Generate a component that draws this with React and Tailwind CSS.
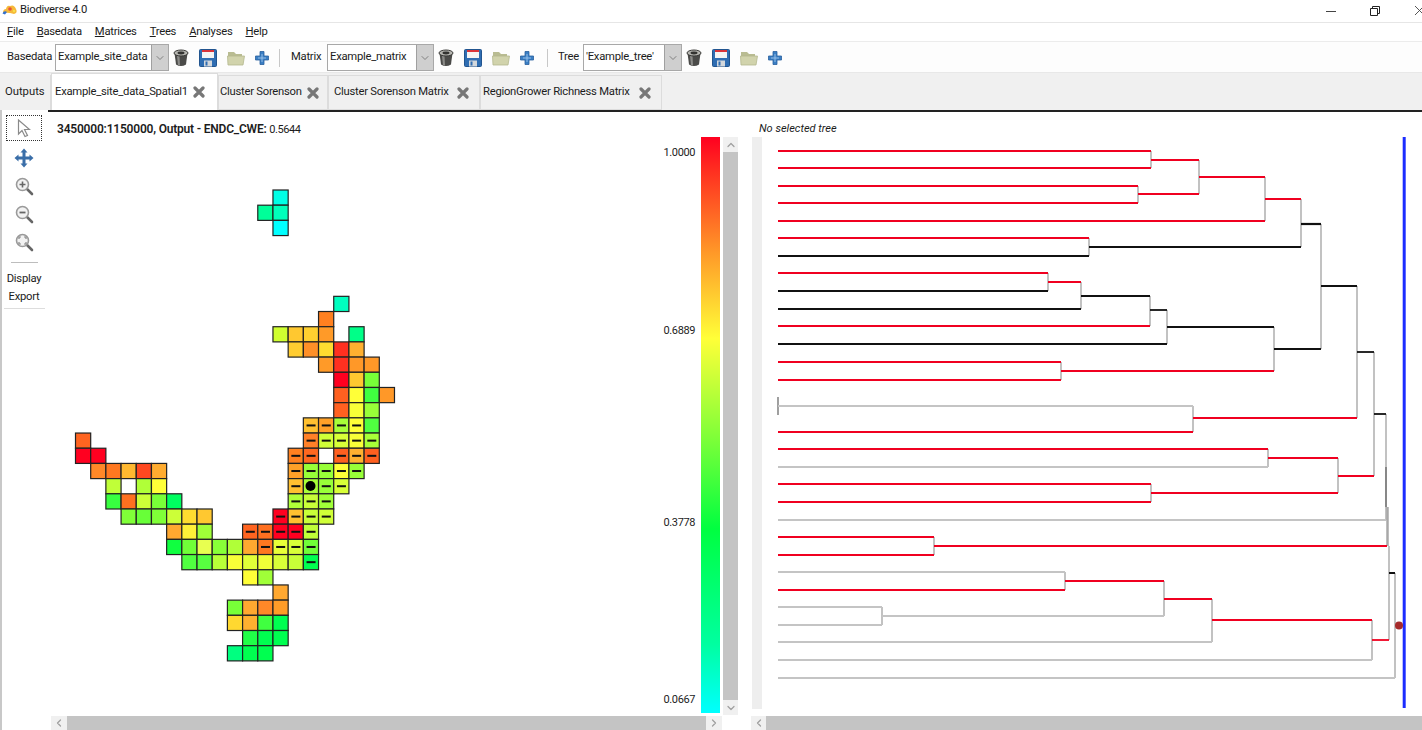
import { ChevronDown, ChevronUp, ChevronLeft, ChevronRight } from "lucide-react";

const R = "#f00020";
const K = "#111111";
const G = "#c4c4c4";
const V = "#a8a8a8";

// [y, x1, x2, colour, thickness]
const horizontals = [
  [151, 778, 1151, R], [168, 778, 1151, R], [160, 1151, 1199, R], [186, 778, 1138, R], [203, 778, 1138, R],
  [194, 1138, 1199, R], [177, 1199, 1265, R], [221, 778, 1265, R], [199, 1265, 1301, R], [238, 778, 1089, R],
  [256, 778, 1089, K], [247, 1089, 1301, K], [224, 1301, 1321, K, 2.2], [286, 1321, 1357, K, 2.2],
  [273, 778, 1048, R], [291, 778, 1048, K], [282, 1048, 1081, R], [309, 778, 1081, K], [296, 1081, 1150, K],
  [326, 778, 1150, R], [310, 1150, 1167, K], [344, 778, 1167, K], [327, 1167, 1274, K], [362, 778, 1061, R],
  [380, 778, 1061, R], [371, 1061, 1274, R], [349, 1274, 1321, K, 2.2], [406, 778, 1193, G], [432, 778, 1193, R],
  [418, 1193, 1357, R], [352, 1357, 1374, K], [414, 1374, 1386, K], [449, 778, 1268, R], [467, 778, 1268, G],
  [458, 1268, 1338, R], [484, 778, 1151, R], [502, 778, 1151, R], [493, 1151, 1338, R], [476, 1338, 1374, R],
  [520, 778, 1386, G], [537, 778, 934, R], [555, 778, 934, R], [546, 934, 1387, R], [572, 778, 1065, G],
  [590, 778, 1065, R], [581, 1065, 1164, R], [607, 778, 882, G], [625, 778, 882, G], [616, 882, 1164, G],
  [599, 1164, 1212, R], [642, 778, 1212, G], [620, 1212, 1372, R, 2], [660, 778, 1372, G], [640, 1372, 1389, R],
  [573, 1389, 1395, K, 2], [678, 778, 1395, G],
];

// [x, y1, y2, colour, thickness]
const verticals = [
  [1151, 151, 168], [1138, 186, 203], [1199, 160, 194], [1265, 177, 221], [1089, 238, 256], [1301, 199, 247],
  [1321, 224, 349], [1048, 273, 291], [1081, 282, 309], [1150, 296, 326], [1167, 310, 344], [1061, 362, 380],
  [1274, 327, 371], [778, 397, 415, "#777777"], [1193, 406, 432], [1357, 286, 418], [1374, 352, 476],
  [1386, 414, 467], [1386, 467, 507, "#555555"], [1386, 507, 520], [1268, 449, 467], [1151, 484, 502], [1338, 458, 493],
  [934, 537, 555], [1387.5, 507, 546, V, 2.5], [1389, 546, 640], [1065, 572, 590], [882, 607, 625], [1164, 581, 616],
  [1212, 599, 642], [1372, 620, 660], [1395, 573, 678],
];

// row, first column, colours; "-" on the end means the cell has a dash, null leaves a hole
const mapRows = [
  [0, 13, ["#00ffe6"]],
  [1, 12, ["#00ff99", "#00ffbb"]],
  [2, 13, ["#00ffff"]],
  [7, 17, ["#00ffc0"]],
  [8, 16, ["#ff8020"]],
  [9, 13, ["#d0ff30", "#ffc830", "#ffd030", "#ff9a28", null, "#00ff88"]],
  [10, 14, ["#ffcc30", "#ff9028", "#ffdc30", "#ff3020", "#ffb030"]],
  [11, 16, ["#ff9a28", "#ff3020", "#ff9828", "#ff9828"]],
  [12, 17, ["#ff0020", "#ffc830", "#78ff38"]],
  [13, 17, ["#ff6020", "#ffff38", "#40ff40", "#ff9828"]],
  [14, 17, ["#ff6020", "#f8ff38", "#98ff38"]],
  [15, 15, ["#ffc030-", "#ffa028-", "#a8ff38-", "#ffff38-", "#50ff40"]],
  [16, 0, ["#ff6420"]],
  [16, 15, ["#ff8028-", "#d0ff38-", "#d8ff38-", "#f8ff38-", "#a8ff38-"]],
  [17, 0, ["#ff0020", "#ff0020"]],
  [17, 14, ["#ff8020-", "#ff6820-", null, "#ff6020-", "#ffb030-", "#ff6020-"]],
  [18, 1, ["#ff8828", "#ff7820", "#ffb830", "#ff4820", "#ffac30"]],
  [18, 14, ["#ffa028-", "#98ff38-", "#98ff38-", "#ffff38-", "#98ff38-"]],
  [19, 2, ["#c0ff38", null, "#b0ff38", "#ffff38"]],
  [19, 14, ["#ffc030-", "#a8ff38", "#98ff38-", "#d8ff38-"]],
  [20, 2, ["#38ff40", "#ff7020", "#ccff38", "#78ff38", "#00ff60"]],
  [20, 14, ["#b0ff38-", "#c8ff38-", "#a0ff38-"]],
  [21, 3, ["#80ff38", "#68ff38", "#80ff38", "#ccff38", "#ffdc30", "#ffc830"]],
  [21, 13, ["#ff0020-", "#ffc030-", "#c8ff38-", "#d0ff38-"]],
  [22, 6, ["#ffa830", "#fff038", "#a0ff38"]],
  [22, 11, ["#ff6420-", "#ff7020-", "#ff0020-", "#ff0020-", "#c0ff38-"]],
  [23, 6, ["#10ff40", "#70ff38", "#e8ff50", "#88ff38", "#b0ff38", "#ffa830", "#ff7820-", "#e8ff38-", "#d8ff38-", "#70ff38-"]],
  [24, 7, ["#50ff40", "#58ff40", "#b8ff38", "#f8ff38", "#e0ff38", "#f0ff38", "#d8ff38", "#c8ff38", "#00ff50-"]],
  [25, 11, ["#ffff38", "#a0ff38"]],
  [26, 13, ["#ffa830"]],
  [27, 10, ["#78ff38", "#ffa830", "#ff8828", "#ff9c28"]],
  [28, 10, ["#ffd830", "#ffb030", "#40ff40", "#00ff50"]],
  [29, 11, ["#20ff48", "#00ff50", "#00ff50"]],
  [30, 10, ["#00ff80", "#00ff50", "#00ff50"]],
];

const PITCH = 15.19;

function MapGrid() {
  const cells = [];
  mapRows.forEach(([row, col, colours]) => {
    colours.forEach((entry, i) => {
      if (entry) cells.push({ x: 75.5 + (col + i) * PITCH, y: 190 + row * PITCH, colour: entry.replace("-", ""), dash: entry.endsWith("-") });
    });
  });
  return (
    <svg viewBox="51 137 599 579" className="w-[599px] h-[579px] shrink-0">
      {cells.map((c, i) => (
        <rect key={i} x={c.x} y={c.y} width={PITCH} height={PITCH} fill={c.colour} stroke="#222222" strokeWidth="1.2" />
      ))}
      {cells.filter((c) => c.dash).map((c, i) => (
        <rect key={i} x={c.x + 3.2} y={c.y + 6.6} width="9" height="2" fill="#111111" />
      ))}
      <circle cx="310.5" cy="486" r="5" fill="#000000" />
    </svg>
  );
}

function Tree() {
  return (
    <svg viewBox="762 137 660 579" className="w-[660px] h-[579px] shrink-0">
      {verticals.map(([x, y1, y2, colour, width], i) => (
        <line key={i} x1={x} y1={y1} x2={x} y2={y2} stroke={colour || V} strokeWidth={width || 1.4} />
      ))}
      {horizontals.map(([y, x1, x2, colour, width], i) => (
        <line key={i} x1={x1} y1={y} x2={x2} y2={y} stroke={colour} strokeWidth={width || 1.8} />
      ))}
      <rect x="1402.7" y="137" width="3" height="571" fill="#1c2dff" />
      <circle cx="1399" cy="625.5" r="4" fill="#a52a2a" />
    </svg>
  );
}

function Barrel() {
  return (
    <svg width="16" height="18" viewBox="0 0 16 18">
      <path d="M1.5 4 L3 15.5 Q8 18.5 13 15.5 L14.5 4 Z" fill="#4a4a48" />
      <path d="M4 7 L5 16 L7 16.6 L6.5 7 Z" fill="#8b8b88" />
      <ellipse cx="8" cy="4" rx="7" ry="3" fill="#b5b5b0" stroke="#3c3c3a" strokeWidth="1" />
      <ellipse cx="8" cy="4" rx="3.5" ry="1.4" fill="#333331" />
    </svg>
  );
}

function Floppy() {
  return (
    <svg width="18" height="18" viewBox="0 0 18 18">
      <rect x="0.5" y="0.5" width="17" height="17" rx="1" fill="#2f6db2" stroke="#22558f" />
      <rect x="3" y="1" width="12" height="8" fill="#f4f4f4" />
      <rect x="3" y="1" width="12" height="2" fill="#d9343a" />
      <rect x="5" y="11.5" width="8" height="6" fill="#d4d8dc" />
      <rect x="6.5" y="12.5" width="2" height="4" fill="#2f6db2" />
    </svg>
  );
}

function Folder() {
  return (
    <svg width="18" height="16" viewBox="0 0 18 16">
      <path d="M1 2 H7 L9 4 H15 V6 H1 Z" fill="#b9bc92" />
      <path d="M0.5 6 H17.5 L16 15 H1 Z" fill="#d1d3ac" stroke="#b4b78e" strokeWidth="0.8" />
    </svg>
  );
}

function Plus() {
  return (
    <svg width="14" height="14" viewBox="0 0 14 14">
      <path d="M5 0.5 H9 V5 H13.5 V9 H9 V13.5 H5 V9 H0.5 V5 H5 Z" fill="#3b7fc4" stroke="#2a5f9e" strokeWidth="0.8" />
      <path d="M3 7 H11 M7 3 V11" stroke="#a9cdf0" strokeWidth="0.8" />
    </svg>
  );
}

function CloseX() {
  return (
    <svg width="12" height="12" viewBox="0 0 12 12" className="shrink-0">
      <path d="M2 2 L10 10 M10 2 L2 10" stroke="#777777" strokeWidth="3.2" strokeLinecap="round" />
    </svg>
  );
}

function Magnifier({ mark }) {
  return (
    <svg width="19" height="19" viewBox="0 0 19 19">
      <path d="M11.5 11.5 L17 17" stroke="#666666" strokeWidth="2.6" strokeLinecap="round" />
      <circle cx="7.5" cy="7.5" r="6" fill="#f2f2f2" stroke="#9a9a9a" strokeWidth="1.6" />
      {mark === "in" && <path d="M4.5 7.5 H10.5 M7.5 4.5 V10.5" stroke="#666666" strokeWidth="1.6" />}
      {mark === "out" && <path d="M4.5 7.5 H10.5" stroke="#666666" strokeWidth="1.8" />}
      {mark === "fit" && <path d="M4 6 V4 H6 M9 4 H11 V6 M11 9 V11 H9 M6 11 H4 V9" stroke="#888888" strokeWidth="1.2" fill="none" />}
    </svg>
  );
}

function Combo({ value, width }) {
  return (
    <div className={`flex h-[27px] bg-white border border-[#a8a8a8] ${width}`}>
      <div className="flex-1 min-w-0 pl-[2px] flex items-center whitespace-nowrap">{value}</div>
      <div className="w-[17px] shrink-0 bg-[#cfcfcf] border-l border-[#a0a0a0] flex items-center justify-center">
        <ChevronDown size={12} color="#666666" strokeWidth={1.5} />
      </div>
    </div>
  );
}

function DataGroup({ label, value, width, labelClass }) {
  return (
    <div className="flex items-center">
      <span className={labelClass}>{label}</span>
      <Combo value={value} width={width} />
      <div className="flex items-center">
        <div className="w-[20px] flex justify-end"><Barrel /></div>
        <div className="w-[28px] flex justify-end"><Floppy /></div>
        <div className="w-[28px] flex justify-end"><Folder /></div>
        <div className="w-[24px] flex justify-end"><Plus /></div>
      </div>
    </div>
  );
}

function Tab({ label, width, pad }) {
  return (
    <div className={`h-[35px] bg-[#f0f0f0] border border-[#dcdcdc] flex items-center justify-between ${pad} ${width}`}>
      <span className="whitespace-nowrap">{label}</span>
      <CloseX />
    </div>
  );
}

export default function App() {
  const menus = [
    ["F", "ile"], ["B", "asedata"], ["M", "atrices"], ["T", "rees"], ["A", "nalyses"], ["H", "elp"],
  ];
  return (
    <div className="w-[1422px] h-[730px] overflow-hidden bg-white flex flex-col font-['Roboto',sans-serif] text-[11.25px] tracking-[-0.25px] text-[#1c1c1c]">
      {/* title bar */}
      <div className="h-[23px] shrink-0 flex items-center border-b border-[#e6e6e6]">
        <svg width="16" height="12" viewBox="0 0 16 12" className="ml-[2px] mr-[2px] -mt-[3px]">
          <path d="M1 9 Q1 5 4 5 Q5 1 8 2 Q12 0 14 5 Q16 9 12 10 Q6 8 1 9 Z" fill="#f6b93a" />
          <path d="M0.5 9.5 Q2 6 5 8 L3 10.5 Z" fill="#2f6fd0" />
          <circle cx="8" cy="5" r="1.8" fill="#e8503a" />
          <circle cx="12" cy="7" r="1.2" fill="#f7e04a" />
        </svg>
        <span className="-mt-[1px]">Biodiverse 4.0</span>
        <div className="ml-auto flex items-center">
          <div className="w-[10px] h-[1px] bg-[#444444] mr-[34px]" />
          <svg width="10" height="10" viewBox="0 0 10 10" className="mr-[35px]">
            <path d="M0.5 2.5 H7.5 V9.5 H0.5 Z M2.5 2.5 V0.5 H9.5 V7.5 H7.5" fill="none" stroke="#222222" strokeWidth="1" />
          </svg>
          <svg width="7" height="10" viewBox="0 0 7 10">
            <path d="M0 0 L9 9 M9 0 L0 9" stroke="#444444" strokeWidth="0.9" />
          </svg>
        </div>
      </div>

      {/* menu */}
      <div className="h-[19px] shrink-0 flex items-center gap-[13px] pl-[7px] border-b border-[#ececec]">
        {menus.map(([first, rest]) => (
          <span key={first + rest}><span className="underline">{first}</span>{rest}</span>
        ))}
      </div>

      {/* toolbar */}
      <div className="h-[30px] shrink-0 flex items-center bg-[#fdfdfd] pl-[7px] pt-[1px]">
        <DataGroup label="Basedata" value="Example_site_data" width="w-[114px]" labelClass="w-[48px]" />
        <div className="w-[1px] h-[18px] bg-[#c8c8c8] ml-[10px] mr-[11px]" />
        <DataGroup label="Matrix" value="Example_matrix" width="w-[107px]" labelClass="w-[36px]" />
        <div className="w-[1px] h-[18px] bg-[#c8c8c8] ml-[13px] mr-[10px]" />
        <DataGroup label="Tree" value="'Example_tree'" width="w-[99px]" labelClass="w-[25px]" />
      </div>

      {/* tabs */}
      <div className="h-[38px] shrink-0 bg-[#f0f0f0] flex items-end border-t border-[#e8e8e8]">
        <div className="h-[35px] w-[51px] flex items-center pl-[5px] border-r border-[#dcdcdc] tracking-normal">Outputs</div>
        <div className="h-[37px] w-[167px] bg-white flex items-center justify-between pl-[3px] pr-[12px] border-x border-t border-[#dcdcdc]">
          <span className="whitespace-nowrap">Example_site_data_Spatial1</span>
          <CloseX />
        </div>
        <Tab label="Cluster Sorenson" width="w-[110px]" pad="pl-[1px] pr-[8px]" />
        <Tab label="Cluster Sorenson Matrix" width="w-[152px]" pad="pl-[5px] pr-[10px]" />
        <Tab label="RegionGrower Richness Matrix" width="w-[182px]" pad="pl-[2px] pr-[10px]" />
      </div>

      {/* body */}
      <div className="flex-1 flex min-h-0">
        <div className="w-[48px] shrink-0 border-l-2 border-[#c8c8c8] flex flex-col items-center pt-[5px] pr-[2px]">
          <div className="w-[36px] h-[26px] border border-dotted border-[#333333] flex items-center justify-center">
            <svg width="14" height="19" viewBox="0 0 14 19">
              <path d="M1.5 1 V15 L5 11.5 L8 17.5 L10.5 16.5 L7.5 10.5 H12.5 Z" fill="#ffffff" stroke="#8a8a8a" strokeWidth="1.2" />
            </svg>
          </div>
          <svg width="20" height="20" viewBox="0 0 20 20" className="mt-[7px]">
            <path d="M10 0.5 L13.5 4.5 H11.5 V8.5 H15.5 V6.5 L19.5 10 L15.5 13.5 V11.5 H11.5 V15.5 H13.5 L10 19.5 L6.5 15.5 H8.5 V11.5 H4.5 V13.5 L0.5 10 L4.5 6.5 V8.5 H8.5 V4.5 H6.5 Z" fill="#3a6ea8" />
          </svg>
          <div className="mt-[9px] flex flex-col gap-[9px]">
            <Magnifier mark="in" />
            <Magnifier mark="out" />
            <Magnifier mark="fit" />
          </div>
          <div className="w-[27px] h-[1px] bg-[#bdbdbd] mt-[10px] mb-[7px]" />
          <div className="leading-[18px] text-center">Display</div>
          <div className="leading-[18px] text-center w-[41px] border-b border-[#dddddd] pb-[2px]">Export</div>
        </div>

        <div className="w-[703px] shrink-0 flex flex-col border-t-2 border-[#222222]">
          <div className="h-[25px] shrink-0 pl-[9px] pt-[9px] leading-[16px] whitespace-nowrap">
            <span className="font-semibold text-[12px] tracking-[-0.2px]">3450000:1150000, Output - ENDC_CWE:</span>{" "}
            <span className="text-[11px] tracking-[-0.4px]">0.5644</span>
          </div>
          <div className="flex h-[579px] shrink-0 pl-[3px]">
            <MapGrid />
            <div className="w-[51px] shrink-0 flex flex-col items-end pr-[6px] leading-[16px] text-[11px] tracking-[-0.4px]">
              <span className="mt-[8px]">1.0000</span>
              <span className="mt-[162px]">0.6889</span>
              <span className="mt-[176px]">0.3778</span>
              <span className="mt-[161px]">0.0667</span>
            </div>
            <div className="w-[19px] h-[576px] shrink-0 bg-[linear-gradient(to_bottom,#ff0020_0%,#ff3020_6%,#ff9828_20%,#ffff38_35%,#80ff38_52%,#00ff40_68%,#00ffa0_88%,#00ffff_100%)]" />
            <div className="ml-[3px] w-[15px] h-[578px] shrink-0 bg-[#f0f0f0] flex flex-col items-center">
              <div className="h-[15px] flex items-center justify-center"><ChevronUp size={12} color="#a0a0a0" strokeWidth={2.5} /></div>
              <div className="flex-1 w-full bg-[#c4c4c4]" />
              <div className="h-[15px] flex items-center justify-center"><ChevronDown size={12} color="#a0a0a0" strokeWidth={2.5} /></div>
            </div>
          </div>
          <div className="flex h-[14px] shrink-0 ml-[3px] w-[671px] bg-[#f0f0f0]">
            <div className="w-[16px] flex items-center justify-center"><ChevronLeft size={12} color="#a0a0a0" strokeWidth={2.5} /></div>
            <div className="flex-1 bg-[#c4c4c4]" />
            <div className="w-[16px] flex items-center justify-center"><ChevronRight size={12} color="#a0a0a0" strokeWidth={2.5} /></div>
          </div>
        </div>

        <div className="flex-1 min-w-0 flex flex-col border-t-2 border-[#222222]">
          <div className="h-[25px] shrink-0 pl-[8px] pt-[9px] leading-[16px] italic text-[11px] tracking-normal">No selected tree</div>
          <div className="flex h-[579px] shrink-0">
            <div className="w-[10px] ml-[1px] h-[572px] bg-[#eeeeee]" />
            <Tree />
          </div>
          <div className="flex h-[14px] shrink-0 bg-[#f0f0f0]">
            <div className="w-[15px] flex items-center justify-center"><ChevronLeft size={12} color="#a0a0a0" strokeWidth={2.5} /></div>
            <div className="flex-1 bg-[#c4c4c4]" />
          </div>
        </div>
      </div>
    </div>
  );
}
